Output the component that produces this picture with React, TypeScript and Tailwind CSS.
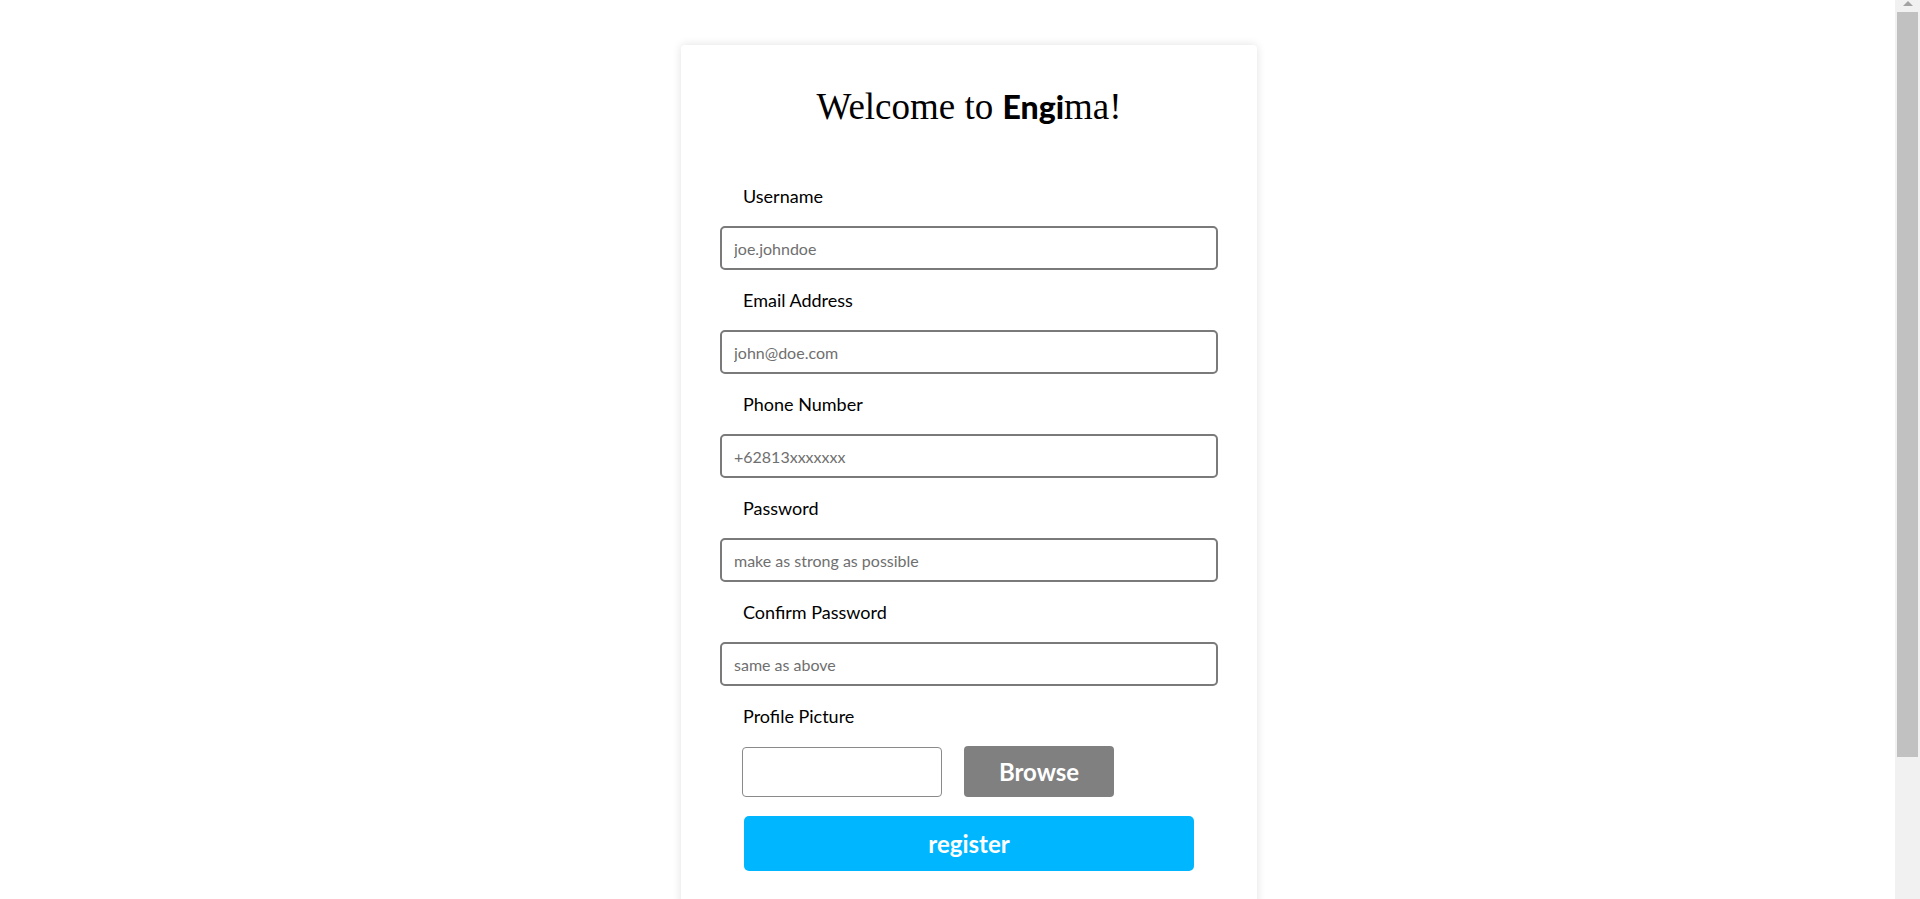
import React from "react";

const fields = [
  { label: "Username", placeholder: "joe.johndoe", type: "text" },
  { label: "Email Address", placeholder: "john@doe.com", type: "email" },
  { label: "Phone Number", placeholder: "+62813xxxxxxx", type: "tel" },
  { label: "Password", placeholder: "make as strong as possible", type: "password" },
  { label: "Confirm Password", placeholder: "same as above", type: "password" },
];

const Field = ({ label, placeholder, type }: { label: string; placeholder: string; type: string }) => (
  <div className="flex flex-col">
    <label className="mt-[19px] mb-[19px] pl-[23px] text-[18px] leading-[22px] text-black">{label}</label>
    <input
      type={type}
      placeholder={placeholder}
      className="h-[44px] w-full rounded-[5px] border-2 border-[#7a7a7a] bg-white px-[12px] text-[16px] text-black outline-none placeholder:text-[#6f6f6f]"
    />
  </div>
);

// fake classic scrollbar, the reference page is taller than the window
const Scrollbar = () => (
  <div className="fixed top-0 right-0 flex h-screen w-[25px] flex-col bg-[#f1f1f1]">
    <div className="flex h-[12px] items-start justify-center pt-[1px]">
      <div className="h-0 w-0 border-x-[5px] border-b-[5px] border-x-transparent border-b-[#a3a3a3]" />
    </div>
    <div className="mx-[2px] h-[745px] bg-[#c1c1c1]" />
  </div>
);

export default function App() {
  return (
    <div className="min-h-screen bg-white pt-[45px] pb-[44px] font-['Lato','Noto_Sans',sans-serif]">
      <div className="ml-[681px] w-[576px] rounded-[4px] bg-white px-[39px] pt-[42px] pb-[128px] shadow-[0_0_10px_rgba(0,0,0,0.12)]">
        <h1 className="text-center font-['Liberation_Serif','Times_New_Roman',serif] text-[37px] leading-[40px] text-black">
          Welcome to{" "}
          <span className="font-['Lato',sans-serif] text-[32px] font-black">Engi</span>
          ma!
        </h1>

        <form className="mt-[39px]" onSubmit={(e) => e.preventDefault()}>
          {fields.map((f) => (
            <Field key={f.label} {...f} />
          ))}

          <label className="mt-[19px] mb-[19px] block pl-[23px] text-[18px] leading-[22px] text-black">Profile Picture</label>
          <div className="flex items-center gap-[22px] pl-[22px]">
            <div className="h-[50px] w-[200px] rounded-[4px] border border-[#8a8a8a] bg-white" />
            <button
              type="button"
              className="h-[51px] w-[150px] rounded-[4px] bg-[#808080] text-[24px] font-bold text-white"
            >
              Browse
            </button>
          </div>

          <div className="mt-[19px] flex justify-center">
            <button
              type="submit"
              className="h-[55px] w-[450px] rounded-[5px] bg-[#00b7ff] text-[24px] font-bold text-white"
            >
              register
            </button>
          </div>
        </form>
      </div>
      <Scrollbar />
    </div>
  );
}
